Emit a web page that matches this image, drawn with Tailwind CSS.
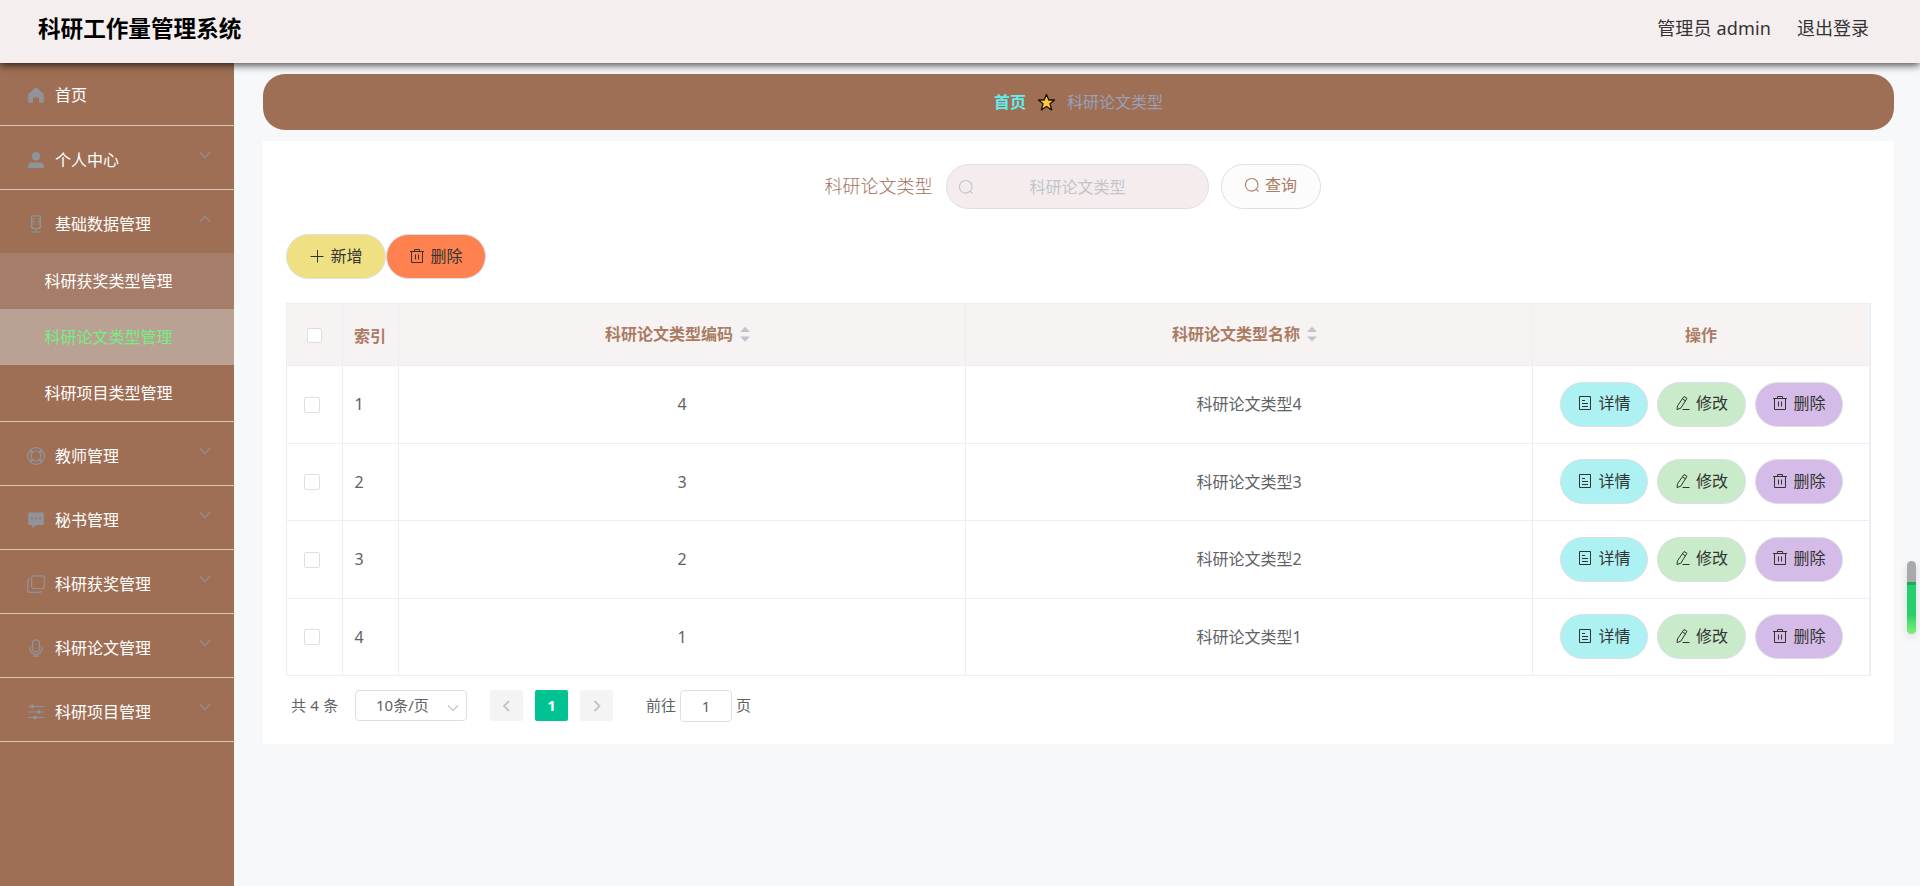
<!DOCTYPE html>
<html lang="zh-CN">
<head>
<meta charset="utf-8">
<title>科研工作量管理系统</title>
<script src="https://cdn.jsdelivr.net/npm/@tailwindcss/browser@4"></script>
</head>
<body class="h-[886px] overflow-hidden bg-[#f7f8fa] font-['Noto_Sans','Noto_Sans_CJK_SC',sans-serif] text-[16px] text-[#606266]">
<svg class="hidden">
  <symbol id="home" viewBox="0 0 16 16"><path fill="currentColor" d="M8 .2 15.800 7v8.800h-4.800V10.500H5v5.300H.2V7z"/></symbol>
  <symbol id="user" viewBox="0 0 16 16"><circle cx="8" cy="4.300" r="4.300" fill="currentColor"/><path fill="currentColor" d="M0 16.500v-2.500a4 4 0 0 1 4-3.500h8a4 4 0 0 1 4 3.500v2.500z"/></symbol>
  <symbol id="mic1" viewBox="0 0 18 18"><g fill="none" stroke="currentColor" stroke-width="1.200"><rect x="4.500" y=".8" width="9" height="12.700" rx="1.500"/><path d="M5 4h3M10.500 4H13M5 6.500h3M10.500 6.500H13M5 9h3M10.500 9H13M9 13.500V17M4 17h10M4.500 11.500l2 2h5l2-2"/></g></symbol>
  <symbol id="help" viewBox="0 0 18 18"><g fill="none" stroke="currentColor" stroke-width="1.200"><circle cx="9" cy="9" r="8.300"/><circle cx="9" cy="9" r="5"/><path d="M3 3.500 5.500 6M3.500 3 6 5.500M15 3.500 12.500 6M14.500 3 12 5.500M3 14.500 5.500 12M3.500 15 6 12.500M15 14.500 12.500 12M14.500 15 12 12.500"/></g></symbol>
  <symbol id="chat" viewBox="0 0 16 16"><path fill="currentColor" d="M.2.500h15.600V13H8.500L4 16v-3H.2z"/><g fill="#9f6f55"><circle cx="4" cy="6.500" r=".9"/><circle cx="8" cy="6.500" r=".9"/><circle cx="12" cy="6.500" r=".9"/></g></symbol>
  <symbol id="copy" viewBox="0 0 18 18"><g fill="none" stroke="currentColor" stroke-width="1.200"><rect x="4.600" y=".8" width="12.700" height="12.700" rx="2"/><path d="M3 4.200C1.500 4.200.7 5 .7 6.200v9C.7 16.500 1.500 17.300 3 17.300h9.500c1.200 0 2-.6 2-1.600"/></g></symbol>
  <symbol id="mic2" viewBox="0 0 18 18"><g fill="none" stroke="currentColor" stroke-width="1.300"><rect x="5.500" y=".8" width="7" height="12" rx="3.500"/><path d="M3 7.500v1.800a6 6 0 0 0 12 0V7.500M9 15.300v1.800M6 17.200h6"/></g></symbol>
  <symbol id="tune" viewBox="0 0 16 16"><path fill="none" stroke="currentColor" stroke-width="1.200" d="M0 2.500h16M0 8h16M0 13.500h16"/><g fill="currentColor"><circle cx="4.500" cy="2.500" r="1.900"/><circle cx="11" cy="8" r="1.900"/><circle cx="7" cy="13.500" r="1.900"/></g></symbol>
  <symbol id="down" viewBox="0 0 12 12"><path fill="none" stroke="currentColor" stroke-width="1.100" d="M1 3.500 6 8.500 11 3.500"/></symbol>
  <symbol id="up" viewBox="0 0 12 12"><path fill="none" stroke="currentColor" stroke-width="1.100" d="M1 8.500 6 3.500 11 8.500"/></symbol>
  <symbol id="search" viewBox="0 0 16 16"><path fill="none" stroke="currentColor" stroke-width="1.100" d="M12.200 12.200A6.300 6.300 0 1 0 7.800 14.100 6.300 6.300 0 0 0 12.200 12.200L14.500 14.500"/></symbol>
  <symbol id="plus" viewBox="0 0 16 16"><path fill="none" stroke="currentColor" d="M1.500 8.500h13M8.500 2v12.500"/></symbol>
  <symbol id="trash" viewBox="0 0 16 16"><path fill="none" stroke="currentColor" d="M1 3.500h14M2.500 3.500v11h11v-11M5.500 3.500v-2h5v2M6.500 6.500v5M9.500 6.500v5"/></symbol>
  <symbol id="doc" viewBox="0 0 16 16"><path fill="none" stroke="currentColor" d="M2.500 1.500h11v13h-11zM5 5.500h3M5 8.500h6M5 11.500h6"/></symbol>
  <symbol id="edit" viewBox="0 0 16 16"><path fill="none" stroke="currentColor" d="M9 1.500 12 3.300 5.800 13.200 2 14.500 2.500 10.800zM7.500 4l3.200 2M7.500 14.500h7"/></symbol>
</svg>

<header class="relative z-10 flex h-[63px] items-start justify-between bg-[#f4eeee] pr-[51px] pl-[38px] shadow-[0_2px_8px_rgba(0,0,0,0.75)]">
  <h1 class="pt-[13px] text-[22.600px] leading-[32px] font-bold text-black">科研工作量管理系统</h1>
  <div class="flex gap-[26px] pt-[14px] text-[18px] leading-[28px] text-[#333]"><span class="tracking-[0.15px]">管理员 admin</span><span>退出登录</span></div>
</header>

<div class="flex h-[823px]">
  <aside class="w-[234px] shrink-0 bg-[#9f6f55] text-white">
    <div class="flex h-[63px] items-center border-b border-[#d6c6bd] pt-[2px] pl-[27px]"><svg class="mr-[10px] size-[18px] p-px text-[#909399]"><use href="#home"/></svg>首页</div>
    <nav id="menu"></nav>
  </aside>

  <main class="flex grow flex-col pt-[11px] pr-[27px] pl-[29px]">
    <div class="flex h-[56px] items-center justify-center rounded-[22px] bg-[#9f6f55]">
      <b class="text-[#61edf0]">首页</b>
      <svg class="mx-[11px] size-[19px]" viewBox="0 0 19 19"><path fill="#ffc83d" stroke="#1c1005" stroke-width="1.300" stroke-linejoin="round" d="M9.500 1.500 11.800 7H17.500L13 10.800 14.700 17 9.500 13.500 4.300 17 6 10.800 1.500 7H7.200z"/></svg>
      <span class="text-[#98a0b8]">科研论文类型</span>
    </div>

    <section class="mt-[11px] h-[603px] bg-white px-[23px] pt-[23px]">
      <div class="flex h-[45px] items-center justify-center pr-[12px]">
        <span class="mr-[13px] text-[18px] font-light text-[#a27059]">科研论文类型</span>
        <div class="flex h-[45px] w-[263px] items-center rounded-full border border-[#dcdfe6] bg-[#f5eded] pl-[11px] text-[#c0c4cc]">
          <svg class="size-4"><use href="#search"/></svg><span class="ml-[56px]">科研论文类型</span>
        </div>
        <div class="ml-[12px] flex h-[45px] w-[100px] items-center justify-center gap-[5px] rounded-full border border-[#dcdfe6] bg-[#fcfcfc] pb-[3px] text-[#ab7c64]"><svg class="size-4"><use href="#search"/></svg>查询</div>
      </div>

      <div class="mt-[25px] flex text-[#333]">
        <div class="flex h-[45px] w-[100px] items-center justify-center gap-[5px] rounded-full border border-[#dcdfe6] bg-[#f0e084] pb-[2px]"><svg class="size-4"><use href="#plus"/></svg>新增</div>
        <div class="flex h-[45px] w-[100px] items-center justify-center gap-[5px] rounded-full border border-[#dcdfe6] bg-[#ff8150] pb-[2px]"><svg class="size-4"><use href="#trash"/></svg>删除</div>
      </div>

      <div class="mt-[24px] w-[1585px] border border-r-2 border-b-0 border-[#ebeef5]">
        <div class="grid h-[62px] grid-cols-[56px_56px_567px_567px_336px] border-b border-[#ebeef5] bg-[#f7f3f3] font-bold text-[#ab7c64]">
          <div class="flex items-center border-r border-[#ebeef5] pt-[2px] pl-[20px]"><i class="size-[15px] rounded-[2px] border border-[#dcdfe6] bg-white"></i></div>
          <div class="flex items-center border-r border-[#ebeef5] pt-[2px] pl-[11px]">索引</div>
          <div class="flex items-center justify-center gap-[6px] border-r border-[#ebeef5] pr-[8px] pb-[2px]">科研论文类型编码<svg class="h-[16px] w-[12px]" viewBox="0 0 12 16"><path fill="#c0c4cc" d="M1 6 6 .8 11 6zM1 10.500h10L6 15.700z"/></svg></div>
          <div class="flex items-center justify-center gap-[6px] border-r border-[#ebeef5] pr-[8px] pb-[2px]">科研论文类型名称<svg class="h-[16px] w-[12px]" viewBox="0 0 12 16"><path fill="#c0c4cc" d="M1 6 6 .8 11 6zM1 10.500h10L6 15.700z"/></svg></div>
          <div class="flex items-center justify-center pt-px">操作</div>
        </div>
        <div id="rows"></div>
      </div>

      <div class="mt-[14px] flex items-start pl-[5px] text-[15px] leading-[31px]">
        <span class="w-[64px] tracking-[0.2px]">共 4 条</span>
        <div class="flex h-[31px] w-[112px] items-center rounded-[4px] border border-[#dcdfe6] pr-[7px] pl-[20px]"><span class="grow leading-[29px]">10条/页</span><svg class="mt-[4px] size-3 text-[#c0c4cc]"><use href="#down"/></svg></div>
        <div class="ml-[23px] flex gap-[12px]">
          <div class="flex h-[31px] w-[33px] items-center justify-center rounded-[2px] bg-[#f4f4f5] text-[#c0c4cc]"><svg class="size-3" viewBox="0 0 12 12"><path fill="none" stroke="currentColor" stroke-width="1.800" d="M8 1 3 6 8 11"/></svg></div>
          <div class="h-[31px] w-[33px] rounded-[2px] bg-[#00c292] text-center font-bold text-white">1</div>
          <div class="flex h-[31px] w-[33px] items-center justify-center rounded-[2px] bg-[#f4f4f5] text-[#c0c4cc]"><svg class="size-3" viewBox="0 0 12 12"><path fill="none" stroke="currentColor" stroke-width="1.800" d="M3.500 1 8.500 6 3.500 11"/></svg></div>
        </div>
        <span class="ml-[33px]">前往</span>
        <div class="mx-[4px] h-[32px] w-[52px] rounded-[4px] border border-[#dcdfe6] text-center leading-[30px]">1</div>
        <span>页</span>
      </div>
    </section>
  </main>
</div>

<div class="absolute top-[561px] left-[1907px] flex h-[73px] w-[9px] flex-col overflow-hidden rounded-full bg-[#a9aaab] shadow-[0_3px_8px_rgba(0,0,0,0.12)]">
  <div class="mt-[21px] h-[3px] bg-[#20a95c]"></div>
  <div class="grow bg-linear-to-b from-[#25cf6b] from-60% to-[#7df07a]"></div>
</div>

<script>
const arrow = id => `<svg class="mr-[23px] mb-[10px] size-3 text-[#909399]"><use href="#${id}"/></svg>`;
const item = (icon, name, subs) => `
  <div class="border-b border-[#d6c6bd]">
    <div class="flex h-[63px] items-center pt-[5px] pl-[27px]">
      <svg class="mr-[10px] mb-px size-[18px] text-[#909399] ${['user','chat','tune'].includes(icon) ? 'p-px' : ''}"><use href="#${icon}"/></svg>
      <span class="grow">${name}</span>${arrow(subs ? 'up' : 'down')}
    </div>${subs || ''}
  </div>`;
const subs = `
  <div class="h-[56px] bg-[#a67d69] pl-[44.500px] leading-[56px]">科研获奖类型管理</div>
  <div class="h-[56px] bg-[#b9a194] pl-[44.500px] leading-[56px] text-[#75ef83]">科研论文类型管理</div>
  <div class="h-[56px] pl-[44.500px] leading-[56px]">科研项目类型管理</div>`;
document.getElementById('menu').innerHTML =
  item('user', '个人中心') + item('mic1', '基础数据管理', subs) + item('help', '教师管理') + item('chat', '秘书管理') +
  item('copy', '科研获奖管理') + item('mic2', '科研论文管理') + item('tune', '科研项目管理');

const btn = (bg, icon, name) => `<div class="flex h-[45px] w-[88.500px] items-center justify-center gap-[5px] rounded-full border border-[#dcdfe6] pb-[2px] ${bg}"><svg class="size-4"><use href="#${icon}"/></svg>${name}</div>`;
document.getElementById('rows').innerHTML = [4, 3, 2, 1].map((n, i) => `
  <div class="grid h-[77.500px] grid-cols-[56px_56px_567px_567px_336px] border-b border-[#ebeef5]">
    <div class="flex items-center border-r border-[#ebeef5] pt-px pl-[17px]"><i class="size-[16px] rounded-[2px] border border-[#dcdfe6] bg-white"></i></div>
    <div class="flex items-center border-r border-[#ebeef5] pl-[11.500px]">${i + 1}</div>
    <div class="flex items-center justify-center border-r border-[#ebeef5]">${n}</div>
    <div class="flex items-center justify-center border-r border-[#ebeef5]">科研论文类型${n}</div>
    <div class="flex items-center justify-center gap-[9px] pl-px text-[#333]">${btn('bg-[#adf1f2]', 'doc', '详情')}${btn('bg-[#c9ebca]', 'edit', '修改')}${btn('bg-[#d5bbe8]', 'trash', '删除')}</div>
  </div>`).join('');
</script>
</body>
</html>
